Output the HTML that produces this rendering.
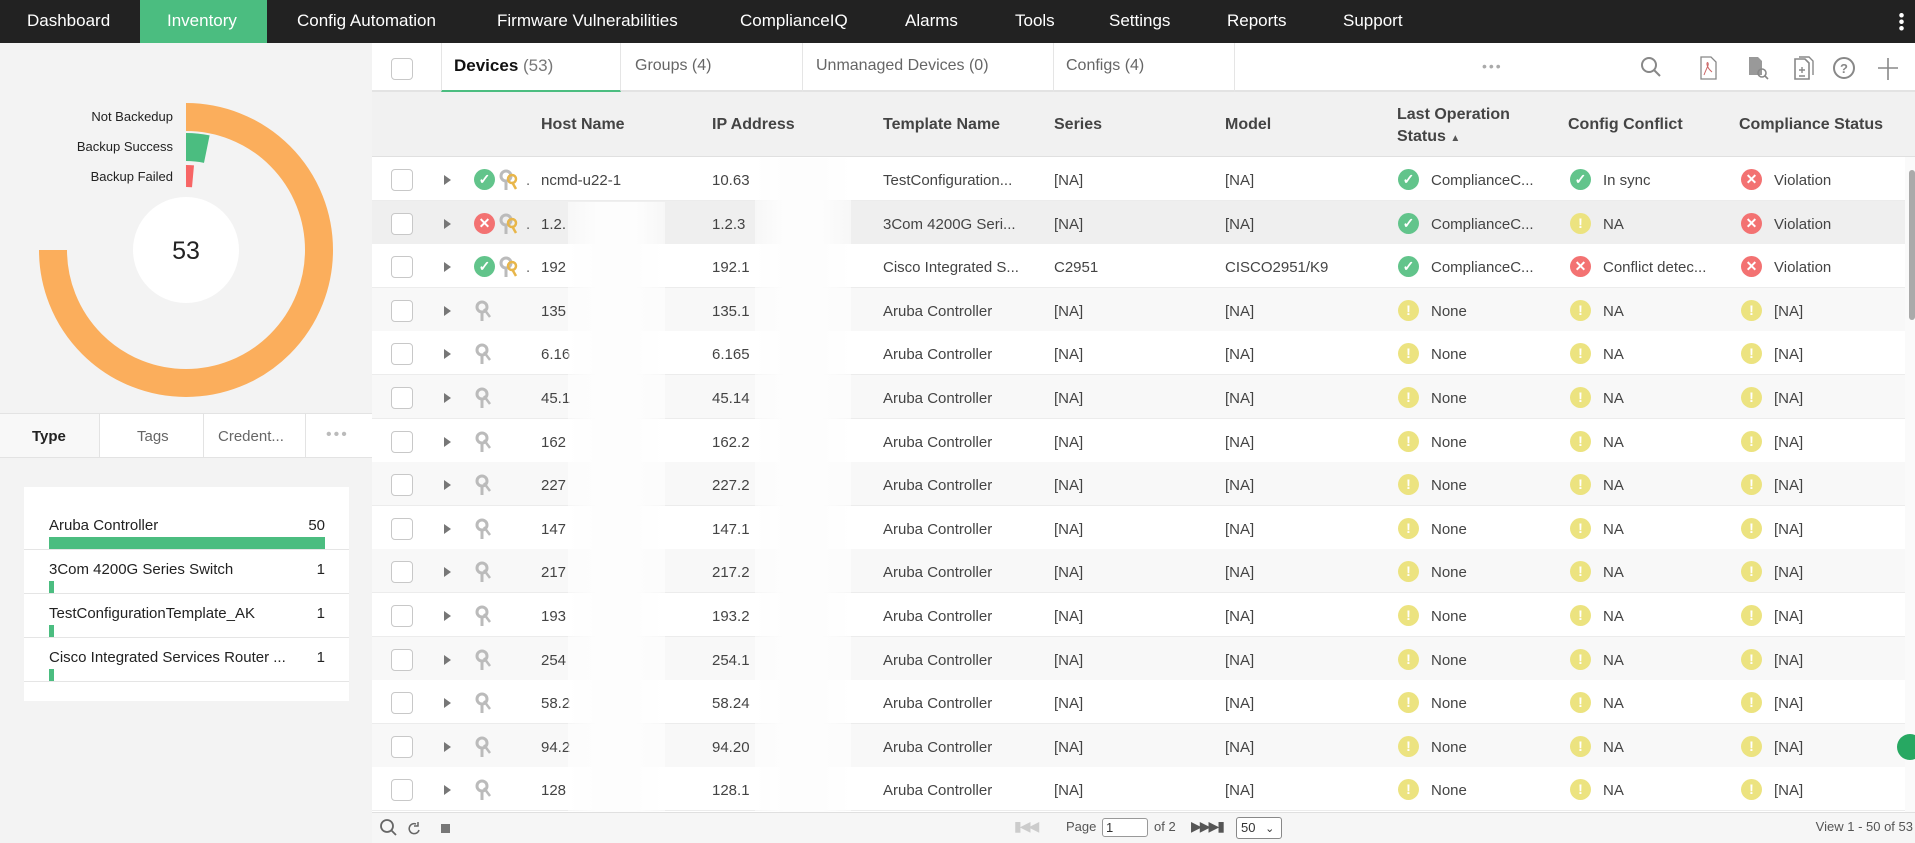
<!DOCTYPE html>
<html><head><meta charset="utf-8">
<style>
*{box-sizing:border-box;margin:0;padding:0}
body{width:1915px;height:843px;overflow:hidden;font-family:"Liberation Sans",sans-serif;background:#fff;position:relative;color:#333}
.a{position:absolute;white-space:nowrap}
#nav{position:absolute;left:0;top:0;width:1915px;height:43px;background:#222}
#nav .a{color:#fff;font-size:17px;top:11px}
#left{position:absolute;left:0;top:43px;width:372px;height:800px;background:#f3f3f3}
.row{position:absolute;left:372px;width:1533px;height:44px;border-bottom:1px solid #ececec}
.row .a{font-size:15px;top:15px;color:#444}
.cb{position:absolute;width:22px;height:22px;border:1px solid #c8c8c8;border-radius:4px;background:#fff}
.tri{position:absolute;width:0;height:0;border-left:7px solid #777;border-top:5px solid transparent;border-bottom:5px solid transparent}
.ic{position:absolute;width:21px;height:21px;border-radius:50%;color:#fff;font-weight:bold;font-size:14px;text-align:center;line-height:21px}
.g{background:#62c48b}.r{background:#f37272}.y{background:#ece380}
.hd{font-size:16px;font-weight:bold;color:#444}
</style></head><body>
<div id="nav">
<div style="position:absolute;left:140px;top:0;width:127px;height:43px;background:#4bbd80"></div>
<span class="a" style="left:27px">Dashboard</span>
<span class="a" style="left:167px">Inventory</span>
<span class="a" style="left:297px">Config Automation</span>
<span class="a" style="left:497px">Firmware Vulnerabilities</span>
<span class="a" style="left:740px">ComplianceIQ</span>
<span class="a" style="left:905px">Alarms</span>
<span class="a" style="left:1015px">Tools</span>
<span class="a" style="left:1109px">Settings</span>
<span class="a" style="left:1227px">Reports</span>
<span class="a" style="left:1343px">Support</span>
<div class="a" style="left:1899px;top:12px;width:5px;height:19px;background:radial-gradient(circle,#fff 2px,transparent 2.5px) 0 0/5px 6.5px"></div>
</div>

<div id="left">
<svg class="a" style="left:0;top:0" width="372" height="370">
<g transform="translate(186,207)">
<path d="M0,-133 A133,133 0 1 1 -133,0" fill="none" stroke="#fbae5c" stroke-width="28"/>
<path d="M0,-103 A103,103 0 0 1 20.8,-100.9" fill="none" stroke="#4bbd80" stroke-width="28"/>
<path d="M0,-74 A74,74 0 0 1 7,-73.7" fill="none" stroke="#f76565" stroke-width="22"/>
<circle r="53" fill="#fff"/>
<text x="0" y="9" text-anchor="middle" font-size="25" fill="#222" font-family="Liberation Sans">53</text>
</g>
<g font-size="13" fill="#222" text-anchor="end" font-family="Liberation Sans">
<text x="173" y="78">Not Backedup</text>
<text x="173" y="108">Backup Success</text>
<text x="173" y="138">Backup Failed</text>
</g>
</svg>
<div class="a" style="left:0;top:370px;width:372px;height:45px;background:#fff;border-top:1px solid #e3e3e3;border-bottom:1px solid #e3e3e3"></div>
<div class="a" style="left:0;top:371px;width:100px;height:43px;background:#f8f8f8;border-right:1px solid #e3e3e3"></div>
<div class="a" style="left:203px;top:371px;width:1px;height:43px;background:#e3e3e3"></div>
<div class="a" style="left:305px;top:371px;width:1px;height:43px;background:#e3e3e3"></div>
<span class="a" style="left:32px;top:385px;font-size:15px;font-weight:bold;color:#222">Type</span>
<span class="a" style="left:137px;top:385px;font-size:15px;color:#666">Tags</span>
<span class="a" style="left:218px;top:385px;font-size:15px;color:#666">Credent...</span>
<span class="a" style="left:326px;top:383px;font-size:16px;color:#bbb;letter-spacing:2px">•••</span>
<div class="a" style="left:24px;top:444px;width:325px;height:214px;background:#fff">
<span class="a" style="left:25px;top:30px;font-size:15px;color:#222">Aruba Controller</span><span class="a" style="right:24px;top:30px;font-size:15px;color:#222">50</span>
<div class="a" style="left:25px;top:50px;width:276px;height:12px;background:#4bbd80"></div>
<div class="a" style="left:0;top:62px;width:325px;height:1px;background:#e5e5e5"></div>
<span class="a" style="left:25px;top:74px;font-size:15px;color:#222">3Com 4200G Series Switch</span><span class="a" style="right:24px;top:74px;font-size:15px;color:#222">1</span>
<div class="a" style="left:25px;top:94px;width:5px;height:12px;background:#4bbd80"></div>
<div class="a" style="left:0;top:106px;width:325px;height:1px;background:#e5e5e5"></div>
<span class="a" style="left:25px;top:118px;font-size:15px;color:#222">TestConfigurationTemplate_AK</span><span class="a" style="right:24px;top:118px;font-size:15px;color:#222">1</span>
<div class="a" style="left:25px;top:138px;width:5px;height:12px;background:#4bbd80"></div>
<div class="a" style="left:0;top:150px;width:325px;height:1px;background:#e5e5e5"></div>
<span class="a" style="left:25px;top:162px;font-size:15px;color:#222">Cisco Integrated Services Router ...</span><span class="a" style="right:24px;top:162px;font-size:15px;color:#222">1</span>
<div class="a" style="left:25px;top:182px;width:5px;height:12px;background:#4bbd80"></div>
<div class="a" style="left:0;top:194px;width:325px;height:1px;background:#e5e5e5"></div>
</div>
</div>

<!-- tabs bar -->
<div class="a" style="left:372px;top:43px;width:1543px;height:49px;background:#fff;border-bottom:2px solid #e3e3e3"></div>
<div class="cb" style="left:391px;top:58px"></div>
<div class="a" style="left:441px;top:43px;width:180px;height:49px;border-bottom:2px solid #4bbd80;border-left:1px solid #e5e5e5;border-right:1px solid #e5e5e5"></div>
<span class="a" style="left:454px;top:56px;font-size:17px"><b style="color:#111">Devices</b> <span style="color:#777">(53)</span></span>
<span class="a" style="left:635px;top:57px;font-size:16px;color:#666">Groups (4)</span>
<div class="a" style="left:802px;top:43px;width:1px;height:49px;background:#e5e5e5"></div>
<span class="a" style="left:816px;top:57px;font-size:16px;color:#666">Unmanaged Devices (0)</span>
<div class="a" style="left:1053px;top:43px;width:1px;height:49px;background:#e5e5e5"></div>
<span class="a" style="left:1066px;top:57px;font-size:16px;color:#666">Configs (4)</span>
<div class="a" style="left:1234px;top:43px;width:1px;height:49px;background:#e5e5e5"></div>
<span class="a" style="left:1482px;top:58px;font-size:14px;color:#aaa;letter-spacing:2px">•••</span>
<svg class="a" style="left:1638px;top:55px" width="260" height="26" fill="none" stroke="#888" stroke-width="2">
<circle cx="11" cy="10" r="7"/><path d="M16 15l6 6"/>
<path d="M63 2h10l5 5v17h-15z" stroke-width="1.3"/><path d="M66 20c3-8 5-10 4-12s-3 3 4 9" stroke="#c66" stroke-width="1"/>
<path d="M111 2h9l4 4v14h-13z" fill="#999" stroke="none"/><circle cx="124" cy="18" r="4" stroke-width="1.6"/><path d="M127 21l3 3" stroke-width="1.6"/>
<path d="M157 4h10l4 4v16h-14z" stroke-width="1.6"/><path d="M161 2h10l4 4v14" stroke-width="1.4"/><path d="M164 12v6M161 15h6M161 21h6" stroke-width="1.4"/>
<circle cx="206" cy="13" r="10"/><text x="206" y="18" font-size="13" text-anchor="middle" fill="#888" stroke="none" font-family="Liberation Sans" font-weight="bold">?</text>
<path d="M240 13h20M250 3v22" stroke-width="1.6"/>
</svg>

<!-- header -->
<div class="a" style="left:372px;top:92px;width:1543px;height:65px;background:#f1f1f1;border-bottom:1px solid #e0e0e0"></div>
<span class="a hd" style="left:541px;top:116px">Host Name</span>
<span class="a hd" style="left:712px;top:116px">IP Address</span>
<span class="a hd" style="left:883px;top:116px">Template Name</span>
<span class="a hd" style="left:1054px;top:116px">Series</span>
<span class="a hd" style="left:1225px;top:116px">Model</span>
<span class="a hd" style="left:1397px;top:104px;line-height:22px">Last Operation<br>Status <span style="font-size:10px;color:#555">&#9650;&#xFE0E;</span></span>
<span class="a hd" style="left:1568px;top:116px">Config Conflict</span>
<span class="a hd" style="left:1739px;top:116px">Compliance Status</span>

<div id="rows"></div>
<script>
var data=[
["g","c","ncmd-u22-1","10.63","TestConfiguration...","[NA]","[NA]",["g","ComplianceC..."],["g","In sync"],["r","Violation"]],
["r","c","1.2.","1.2.3","3Com 4200G Seri...","[NA]","[NA]",["g","ComplianceC..."],["y","NA"],["r","Violation"]],
["g","c","192","192.1","Cisco Integrated S...","C2951","CISCO2951/K9",["g","ComplianceC..."],["r","Conflict detec..."],["r","Violation"]]];
var h=["135","6.16","45.1","162","227","147","217","193","254","58.2","94.2","128"],ip=["135.1","6.165","45.14","162.2","227.2","147.1","217.2","193.2","254.1","58.24","94.20","128.1"];
for(var i=0;i<12;i++)data.push(["","",h[i],ip[i],"Aruba Controller","[NA]","[NA]",["y","None"],["y","NA"],["y","[NA]"]]);
var o="",sym={g:"&#10003;",r:"&#10005;",y:"!"};
data.forEach(function(d,i){
 var top=157+i*43.6,bg=i==1?"#efefef":(i%2?"#f8f8f8":"#fff");
 o+='<div class="row" style="top:'+top+'px;background:'+bg+'">';
 o+='<div class="cb" style="left:19px;top:12px"></div><div class="tri" style="left:72px;top:18px"></div>';
 if(d[0])o+='<div class="ic '+d[0]+'" style="left:102px;top:12px">'+sym[d[0]]+'</div>';
 var kx=d[0]?127:103;
 o+='<svg class="a" style="left:'+kx+'px;top:12px" width="22" height="22"><circle cx="7" cy="7" r="5" fill="none" stroke="#bbb" stroke-width="3"/><path d="M7 11v10" stroke="#bbb" stroke-width="3"/>'+(d[0]?'<circle cx="13" cy="10" r="4" fill="none" stroke="#e8b64a" stroke-width="2.5"/><path d="M13 13l4 7" stroke="#e8b64a" stroke-width="2.5"/>':'<path d="M9 9l6 8" stroke="#bbb" stroke-width="2.5"/>')+'</svg>';
 if(d[0])o+='<span class="a" style="left:154px;color:#666">.</span>';
 o+='<span class="a" style="left:169px">'+d[2]+'</span><span class="a" style="left:340px">'+d[3]+'</span><span class="a" style="left:511px">'+d[4]+'</span><span class="a" style="left:682px">'+d[5]+'</span><span class="a" style="left:853px">'+d[6]+'</span>';
 [[7,1026],[8,1198],[9,1369]].forEach(function(c){var s=d[c[0]];o+='<div class="ic '+s[0]+'" style="left:'+c[1]+'px;top:12px">'+sym[s[0]]+'</div><span class="a" style="left:'+(c[1]+33)+'px">'+s[1]+'</span>';});
 o+='</div>';
});
document.getElementById("rows").innerHTML=o;
</script>
<!-- blur patches -->
<div class="a" style="left:568px;top:202px;width:97px;height:610px;background:linear-gradient(90deg,rgba(255,255,255,.5),#fdfdfd 30%,#fdfdfd 70%,rgba(255,255,255,.5))"></div>
<div class="a" style="left:755px;top:158px;width:96px;height:654px;background:linear-gradient(90deg,rgba(255,255,255,.5),#fdfdfd 30%,#fdfdfd 70%,rgba(255,255,255,.5))"></div>
<!-- scrollbar -->
<div class="a" style="left:1905px;top:157px;width:10px;height:655px;background:#fafafa"></div>
<div class="a" style="left:1909px;top:170px;width:6px;height:150px;background:#aaa;border-radius:3px"></div>
<div class="a" style="left:1897px;top:734px;width:26px;height:26px;border-radius:50%;background:#27a862"></div>
<!-- pager -->
<div class="a" style="left:372px;top:812px;width:1543px;height:31px;background:#f6f6f6;border-top:1px solid #e0e0e0"></div>
<svg class="a" style="left:378px;top:818px" width="80" height="20" fill="none" stroke="#666" stroke-width="1.8"><circle cx="9" cy="8" r="6"/><path d="M13 12l5 5"/><path d="M38 6a5 5 0 1 0 3 6M40 4v4h-4" stroke-width="1.5"/><rect x="63" y="6" width="9" height="9" fill="#777" stroke="none"/></svg>
<span class="a" style="left:1014px;top:818px;font-size:14px;color:#ccc;letter-spacing:-2px">&#9646;&#9664;&#9664;</span>
<span class="a" style="left:1066px;top:819px;font-size:13px;color:#555">Page</span>
<div class="a" style="left:1102px;top:818px;width:46px;height:19px;background:#fff;border:1px solid #999;border-radius:3px;font-size:13px;padding-left:3px;line-height:17px">1</div>
<span class="a" style="left:1154px;top:819px;font-size:13px;color:#555">of 2</span>
<span class="a" style="left:1191px;top:818px;font-size:14px;color:#555;letter-spacing:-2px">&#9654;&#9654;&#9654;&#9646;</span>
<div class="a" style="left:1236px;top:817px;width:46px;height:22px;background:#fff;border:1px solid #888;border-radius:3px;font-size:13px;padding-left:4px;line-height:20px">50 <span style="font-size:11px;margin-left:6px">&#8964;</span></div>
<span class="a" style="right:2px;top:819px;font-size:13px;color:#555">View 1 - 50 of 53</span>
</body></html>
